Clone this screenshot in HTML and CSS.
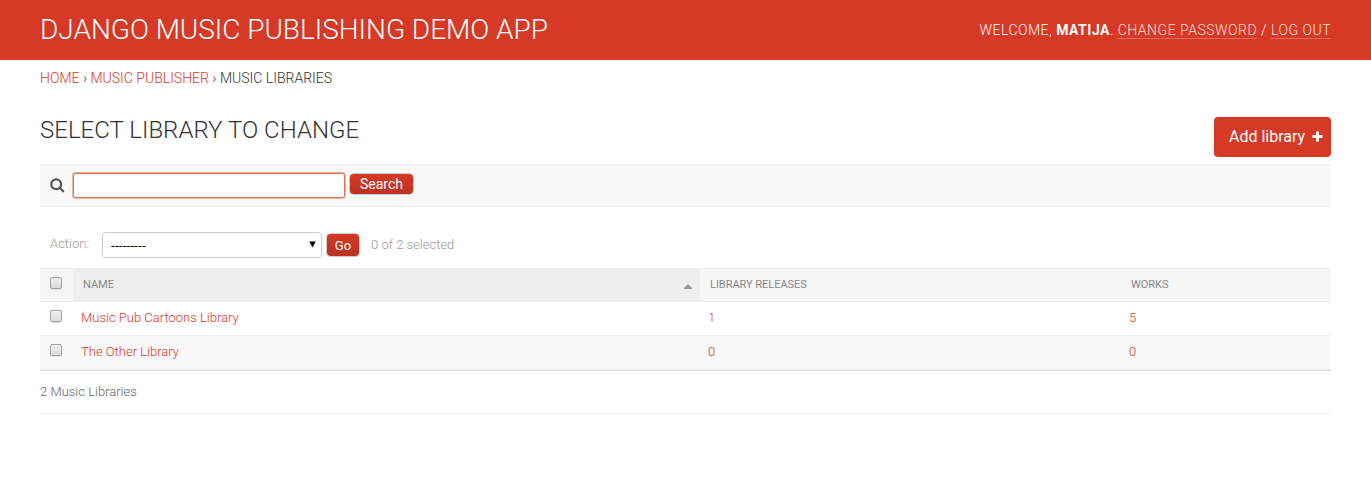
FILE: index.html
```html
<!DOCTYPE html>
<html lang="en"><head><meta charset="utf-8"><title>Select library to change</title><link rel="stylesheet" href="styles.css"></head>
<body>
<header class="header"><h1 class="brand">DJANGO MUSIC PUBLISHING DEMO APP</h1>
<div class="user-tools">WELCOME, <strong>MATIJA</strong>. <a href="#">CHANGE PASSWORD</a> / <a href="#">LOG OUT</a></div></header>
<nav class="breadcrumbs"><a href="#">HOME</a> › <a href="#">MUSIC PUBLISHER</a> › MUSIC LIBRARIES</nav>
<main class="content">
<div class="title-row"><h2 class="title">SELECT LIBRARY TO CHANGE</h2><a class="add" href="#">Add library<svg class="plus" viewBox="0 0 11 11"><path d="M4.5 0.5h2q.5 0 .5.5v3h3q.5 0 .5.5v2q0 .5-.5.5H7v3q0 .5-.5.5h-2q-.5 0-.5-.5V7H1q-.5 0-.5-.5v-2Q.5 4 1 4h3V1q0-.5.5-.5z"/></svg></a></div>
<div class="toolbar"><svg class="glass" viewBox="0 0 15 15"><circle cx="6.2" cy="6.2" r="4.9"/><path d="M9.8 9.8L13.2 13.2" stroke-linecap="round"/></svg><input class="query" type="text" aria-label="Search"><button class="btn search">Search</button></div>
<div class="actions"><span class="label">Action:</span><div class="select"><span class="dashes">---------</span><svg class="arrow" viewBox="0 0 7 7"><path d="M0.3 0.5h6.4L3.5 6.5z"/></svg></div><button class="btn go">Go</button><span class="count">0 of 2 selected</span></div>
<div class="table">
<div class="row head"><div class="cell"><span class="box"></span></div><div class="cell sorted">NAME<svg class="sort" viewBox="0 0 8 5"><path d="M0 5V4L4 0l4 4v1z"/></svg></div><div class="cell">LIBRARY RELEASES</div><div class="cell">WORKS</div></div>
<div class="row"><div class="cell"><span class="box"></span></div><div class="cell"><a href="#">Music Pub Cartoons Library</a></div><div class="cell"><a class="narrow" href="#">1</a></div><div class="cell"><a href="#">5</a></div></div>
<div class="row alt"><div class="cell"><span class="box"></span></div><div class="cell"><a href="#">The Other Library</a></div><div class="cell"><a href="#">0</a></div><div class="cell"><a href="#">0</a></div></div>
</div>
<div class="paginator">2 Music Libraries</div>
</main></body></html>
```
FILE: styles.css
```css
* { box-sizing: border-box; }
body { margin: 0; background: #fff; font-family: Roboto, sans-serif; font-size: 13px; font-weight: 400; color: #333; }
a { color: #d63926; text-decoration: none; }
.header { display: flex; justify-content: space-between; align-items: center; height: 60px; padding: 0 40px; background: #d63926; color: #fff; }
.brand { margin: 0; font-size: 28px; font-weight: 300; line-height: 60px; letter-spacing: -.02px; }
.user-tools { font-size: 14px; font-weight: 300; letter-spacing: .5px; }
.user-tools strong { font-weight: 700; }
.user-tools a { color: #fbe1dd; border-bottom: 1px solid rgba(255,255,255,.25); }
.breadcrumbs { height: 36px; padding: 0 40px; line-height: 36px; font-size: 14px; font-weight: 300; }
.content { padding: 0 40px; }
.title-row { display: flex; justify-content: space-between; height: 68px; padding-top: 21px; }
.title { margin: 0; font-size: 24px; font-weight: 300; line-height: 26px; letter-spacing: .02px; }
.add { display: flex; align-items: center; justify-content: space-between; width: 117px; height: 40px; padding: 0 8px 1px 15px; border-radius: 4px; background: #d63926; color: #fff; font-size: 16px; }
.plus { width: 11px; height: 11px; fill: #fff; }
.toolbar { display: flex; height: 43px; padding: 8px 10px; border-top: 1px solid #eee; border-bottom: 1px solid #eee; background: #f8f8f8; }
.glass { width: 15px; height: 15px; margin: 5px 8px 0 0; fill: none; stroke: #555; stroke-width: 2.2; }
.query { width: 272px; height: 25px; border: 1px solid #cf7a5f; border-radius: 3px; outline: none; background: #fff; box-shadow: 0 0 0 1px #edb19b; }
.btn { padding: 0; border: 1px solid #ccc; border-radius: 4px; background: linear-gradient(#d63926, #b93221) padding-box; color: #fff; font-family: inherit; }
.search { width: 65px; height: 22px; margin-left: 4px; font-size: 14px; }
.actions { display: flex; align-items: center; height: 61px; padding: 15px 10px 0; color: #999; font-weight: 300; }
.label { width: 52px; padding-bottom: 4px; }
.count { padding-bottom: 2px; }
.select { display: flex; align-items: center; justify-content: space-between; width: 220px; height: 26px; padding: 0 5px 0 8px; border: 1px solid #ccc; border-radius: 4px; color: #000; font-weight: 400; }
.dashes { letter-spacing: .3px; }
.arrow { width: 7px; height: 7px; margin-top: -1px; }
.go { width: 34px; height: 24px; margin: 0 11px 0 4px; font-size: 13px; }
.table { border-bottom: 1px solid #ddd; }
.row { display: grid; grid-template-columns: 33px 627px 421px 1fr; height: 34px; border-bottom: 1px solid #eee; }
.cell { display: flex; align-items: center; padding: 0 8px 2px; font-weight: 300; }
.row .cell:first-child { padding: 0 0 5px 10px; }
.head { border-top: 1px solid #eee; background: #f6f6f6; }
.head .cell { padding: 0 10px 1px; font-size: 11px; color: #888; font-weight: 400; letter-spacing: -.03px; }
.head .cell:first-child { padding: 0 0 4px 10px; }
.head .sorted { justify-content: space-between; background: #eee; padding-right: 8px; }
.sort { width: 8px; height: 5px; margin-top: 3px; fill: #999; }
.box { width: 12px; height: 12px; border: 1px solid #a3a3a3; border-radius: 2px; background: linear-gradient(#ededed, #dcdcdc); box-shadow: 0 1px 1px #ddd; }
.alt { background: #f9f9f9; }
.narrow { color: #c83c55; }
.paginator { height: 43px; line-height: 42px; border-bottom: 1px solid #eee; color: #666; font-weight: 300; }
```
